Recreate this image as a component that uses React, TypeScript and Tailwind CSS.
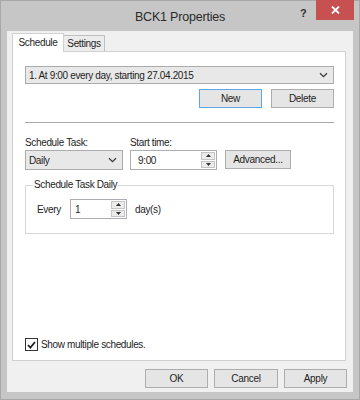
import type { ReactNode } from 'react'

const FONT = "font-['Liberation_Sans',Arial,sans-serif]"

function Chevron() {
  return (
    <svg width="9" height="6" viewBox="0 0 9 6" className="shrink-0">
      <path d="M1 1.2 L4.5 4.6 L8 1.2" fill="none" stroke="#3c3c3c" strokeWidth="1.3" />
    </svg>
  )
}

function Combo({ text, className = '' }: { text: string; className?: string }) {
  return (
    <div className={`flex items-center justify-between border border-[#acacac] bg-[#e8e8e8] pl-[3px] pr-[5px] ${className}`}>
      <span>{text}</span>
      <Chevron />
    </div>
  )
}

function Btn({ children, focused = false, className = '' }: { children: ReactNode; focused?: boolean; className?: string }) {
  return (
    <button
      type="button"
      className={`flex items-center justify-center border bg-[#e5e5e5] text-[10px] tracking-[-0.3px] text-[#1e1e1e] ${
        focused ? 'border-[#5ea6e8]' : 'border-[#adadad]'
      } ${className}`}
    >
      {children}
    </button>
  )
}

function Spinner() {
  return (
    <div className="flex w-[14px] flex-col gap-px self-stretch py-[1px]">
      <div className="flex flex-1 items-center justify-center border border-[#c4c4c4] bg-[#ececec]">
        <svg width="5" height="3" viewBox="0 0 5 3"><path d="M0 3 L2.5 0 L5 3Z" fill="#303030" /></svg>
      </div>
      <div className="flex flex-1 items-center justify-center border border-[#c4c4c4] bg-[#ececec]">
        <svg width="5" height="3" viewBox="0 0 5 3"><path d="M0 0 L2.5 3 L5 0Z" fill="#303030" /></svg>
      </div>
    </div>
  )
}

function NumInput({ value, className = '' }: { value: string; className?: string }) {
  return (
    <div className={`flex items-center border border-[#abadb3] bg-white pr-px ${className}`}>
      <span className="flex-1">{value}</span>
      <Spinner />
    </div>
  )
}

export default function App() {
  return (
    <div className={`flex h-[400px] w-[360px] flex-col border border-[#a8a8a8] bg-[#c6c6c6] ${FONT}`}>
      {/* Title bar */}
      <div className="relative flex h-[30px] shrink-0 items-center justify-center">
        <span className="mt-[2px] text-[12.5px] tracking-[-0.2px] text-[#2b2b2b]">BCK1 Properties</span>
        <span className="absolute left-[299px] top-[4px] text-[11px] font-bold text-[#303030]">?</span>
        <div className="absolute right-[5px] top-[-1px] flex h-[20px] w-[38px] items-center justify-center bg-[#c75050]">
          <svg width="9" height="8" viewBox="0 0 9 8">
            <path d="M1 0.5 L8 7.5 M8 0.5 L1 7.5" stroke="white" strokeWidth="1.8" />
          </svg>
        </div>
      </div>

      {/* Client area */}
      <div className="mx-[6px] flex h-[361px] flex-col bg-[#f0f0f0] text-[10px] tracking-[-0.35px] text-[#1e1e1e]">
        {/* Tabs */}
        <div className="ml-[5px] mt-[1px] flex h-[19px] items-end">
          <div className="relative z-10 -mb-px flex h-[19px] w-[52px] items-center justify-center border border-b-0 border-[#d0d0d0] bg-white pb-px">
            Schedule
          </div>
          <div className="flex h-[16px] w-[41px] items-center justify-center border border-b-0 border-l-0 border-[#c0c0c0] bg-[#ececec]">
            Settings
          </div>
        </div>

        {/* Tab panel */}
        <div className="ml-[5px] flex h-[310px] w-[334px] flex-col border border-[#d0d0d0] bg-white pl-[12px] pr-[11px] pt-[14px]">
          <Combo text="1. At 9:00 every day, starting 27.04.2015" className="h-[18px] w-[309px]" />

          <div className="mt-[5px] flex justify-end gap-[9px]">
            <Btn focused className="h-[19px] w-[63px]">New</Btn>
            <Btn className="h-[19px] w-[63px]">Delete</Btn>
          </div>

          <div className="mt-[14px] h-px w-[309px] bg-[#a9a9a9]" />

          <div className="mt-[12px] flex">
            <div className="flex w-[105px] flex-col">
              <span className="h-[15px] leading-[15px]">Schedule Task:</span>
              <Combo text="Daily" className="h-[20px] w-[98px] bg-[#e6e6e6]" />
            </div>
            <div className="flex w-[95px] flex-col">
              <span className="h-[15px] leading-[15px]">Start time:</span>
              <NumInput value="9:00" className="h-[20px] w-[87px] pl-[7px]" />
            </div>
            <div className="flex flex-col justify-end pb-px">
              <Btn className="h-[19px] w-[66px]">Advanced...</Btn>
            </div>
          </div>

          {/* Group box */}
          <div className="relative mt-[15px] h-[49px] w-[309px] border border-[#d8d8d8]">
            <span className="absolute left-[7px] top-[-8px] bg-white px-px leading-[14px]">Schedule Task Daily</span>
            <div className="mt-[13px] flex items-center pl-[11px]">
              <span className="w-[33px]">Every</span>
              <NumInput value="1" className="h-[20px] w-[57px] pl-[4px]" />
              <span className="ml-[8px]">day(s)</span>
            </div>
          </div>

          <div className="flex-1" />

          <div className="mb-[8px] flex items-center gap-[3px]">
            <div className="flex h-[13px] w-[13px] items-center justify-center border border-[#333333] bg-white">
              <svg width="9" height="8" viewBox="0 0 9 8">
                <path d="M1 4 L3.4 6.6 L8 1" fill="none" stroke="#1e1e1e" strokeWidth="1.7" />
              </svg>
            </div>
            <span>Show multiple schedules.</span>
          </div>
        </div>

        {/* Dialog buttons */}
        <div className="mr-[6px] mt-[8px] flex justify-end gap-[6px]">
          <Btn className="h-[19px] w-[63px]">OK</Btn>
          <Btn className="h-[19px] w-[64px]">Cancel</Btn>
          <Btn className="h-[19px] w-[63px]">Apply</Btn>
        </div>
      </div>
    </div>
  )
}
